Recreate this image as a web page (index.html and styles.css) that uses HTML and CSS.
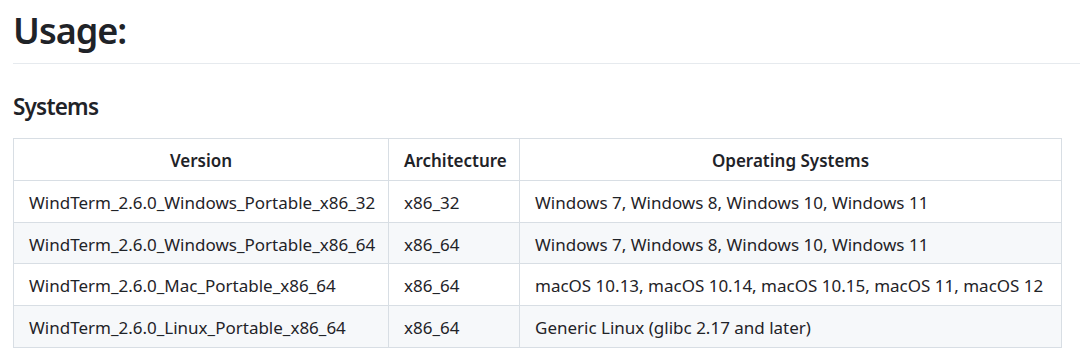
FILE: index.html
```html
<!DOCTYPE html>
<html>
<head>
<meta charset="utf-8">
<link rel="stylesheet" href="styles.css">
</head>
<body>
<article class="markdown">
  <h1 class="title">Usage:</h1>
  <h3 class="subtitle">Systems</h3>
  <table class="systems">
    <colgroup>
      <col class="c-version">
      <col class="c-arch">
      <col class="c-os">
    </colgroup>
    <thead>
      <tr><th>Version</th><th>Architecture</th><th>Operating Systems</th></tr>
    </thead>
    <tbody>
      <tr><td>WindTerm_2.6.0_Windows_Portable_x86_32</td><td>x86_32</td><td>Windows 7, Windows 8, Windows 10, Windows 11</td></tr>
      <tr><td>WindTerm_2.6.0_Windows_Portable_x86_64</td><td>x86_64</td><td>Windows 7, Windows 8, Windows 10, Windows 11</td></tr>
      <tr><td>WindTerm_2.6.0_Mac_Portable_x86_64</td><td>x86_64</td><td>macOS 10.13, macOS 10.14, macOS 10.15, macOS 11, macOS 12</td></tr>
      <tr><td>WindTerm_2.6.0_Linux_Portable_x86_64</td><td>x86_64</td><td>Generic Linux (glibc 2.17 and later)</td></tr>
    </tbody>
  </table>
</article>
</body>
</html>
```
FILE: styles.css
```css
html, body {
  margin: 0;
  padding: 0;
  background: #ffffff;
}
body {
  font-family: "Noto Sans", "Open Sans", sans-serif;
  font-size: 17px;
  line-height: 1.5;
  color: #1f2328;
}
.markdown {
  padding: 0 0 0 13px;
}
.title {
  margin: 8px 0 0 0;
  padding: 0 0 10px 0;
  font-size: 36px;
  line-height: 1.25;
  font-weight: 600;
  letter-spacing: -1px;
  border-bottom: 1px solid #e6eaee;
}
.subtitle {
  margin: 29px 0 17px 0;
  font-size: 22.5px;
  line-height: 1.25;
  font-weight: 600;
  letter-spacing: -0.8px;
}
.systems {
  border-collapse: collapse;
  border-spacing: 0;
  table-layout: fixed;
  width: 1048px;
}
.c-version { width: 375px; }
.c-arch { width: 131px; }
.c-os { width: 542px; }
.systems th,
.systems td {
  border: 1px solid #d8dee4;
  padding: 8px 15px 5.75px 15px;
  line-height: 27px;
  white-space: nowrap;
}
.systems th {
  font-weight: 600;
  text-align: center;
}
.systems td {
  text-align: left;
}
.systems tbody tr:nth-child(2n) {
  background: #f6f8fa;
}
```
